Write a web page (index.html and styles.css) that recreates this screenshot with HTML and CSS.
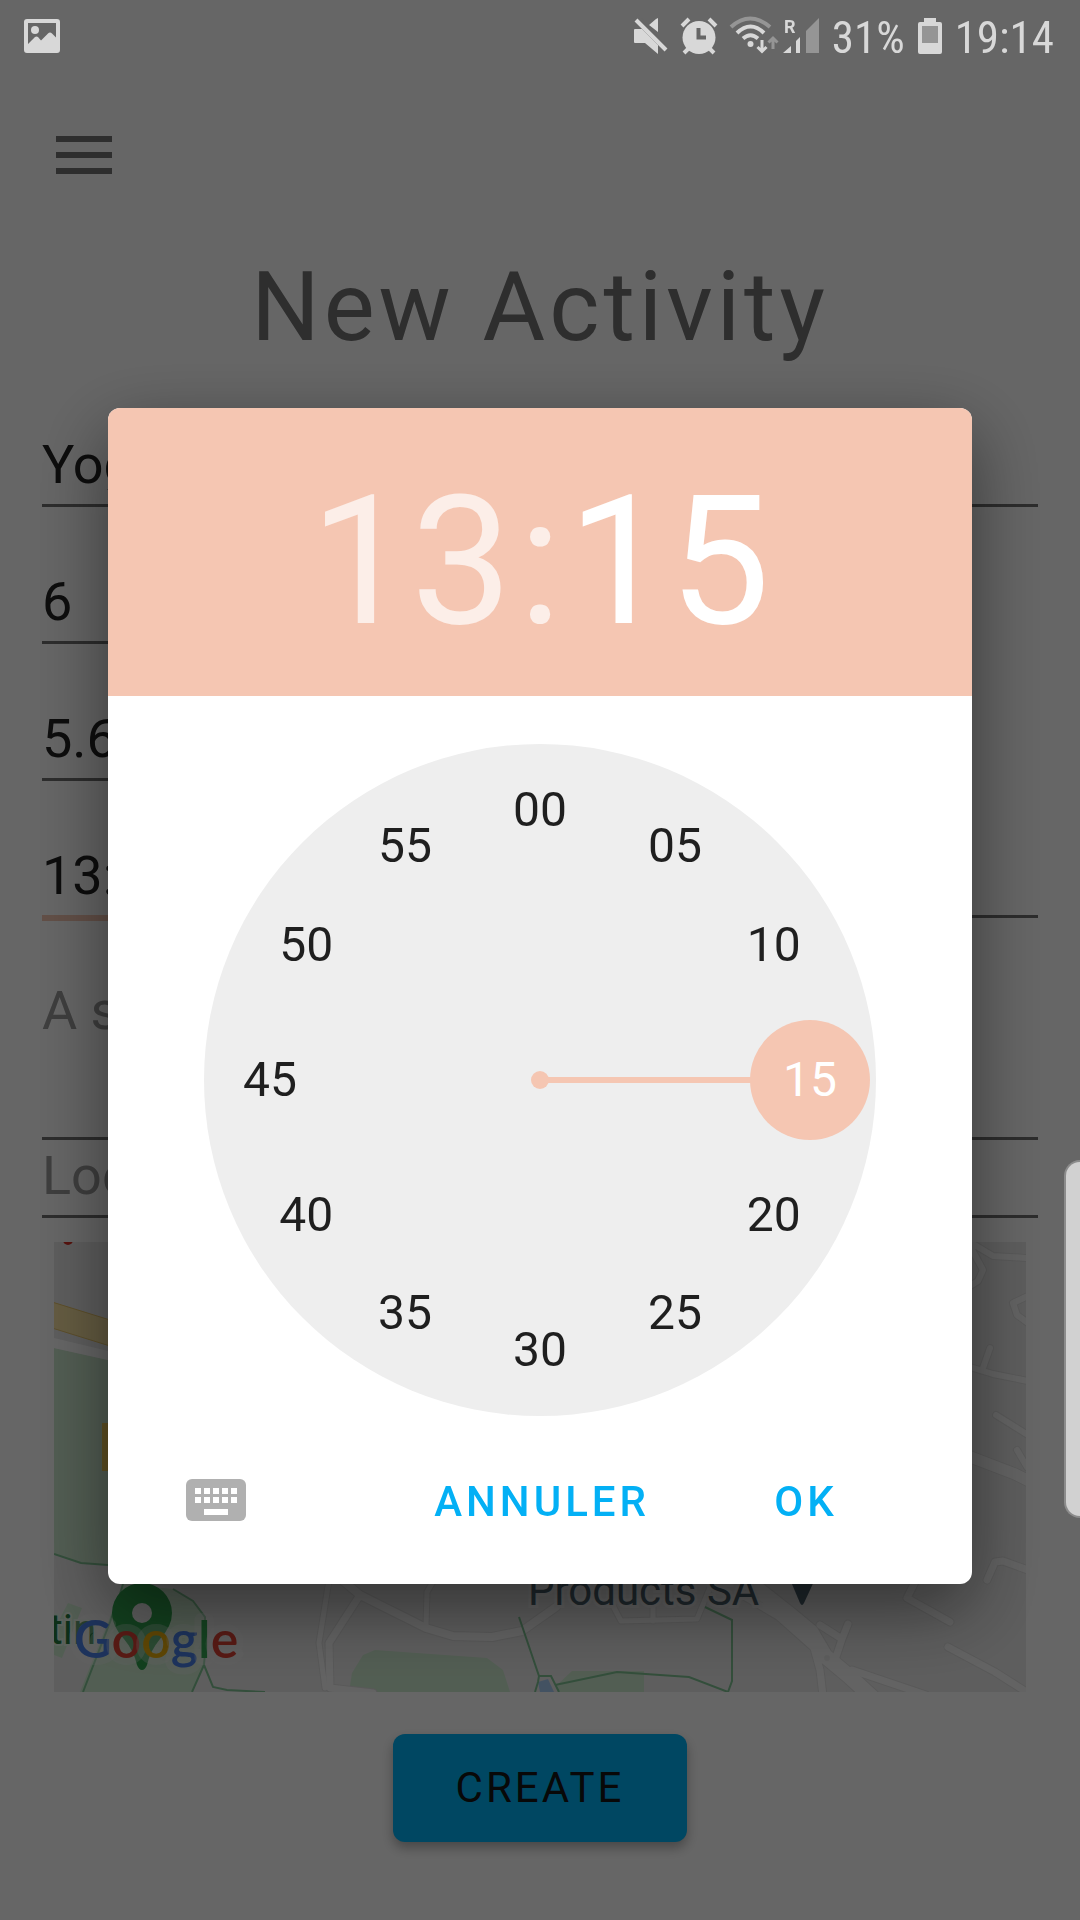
FILE: index.html
```html
<!DOCTYPE html>
<html lang="fr">
<head>
<meta charset="utf-8">
<meta name="viewport" content="width=device-width, initial-scale=1">
<title>New Activity</title>
<link rel="stylesheet" href="styles.css">
</head>
<body>
<header class="status">
  <svg class="status-icon status-photo" viewBox="0 0 36 36" width="36" height="36" aria-hidden="true">
    <path fill-rule="evenodd" d="M3 1h30a3 3 0 0 1 3 3v28a3 3 0 0 1-3 3H3a3 3 0 0 1-3-3V4a3 3 0 0 1 3-3zM4 5v21l7-7q1.500-1 3 0l3 3.500 7-7q2-2 4 0l4 4V5z"/>
    <circle cx="11" cy="12" r="4"/>
  </svg>
  <svg class="status-icon" viewBox="0 0 34 36" width="34" height="36" aria-hidden="true">
    <path d="M1 11h7L24 27v9L11 25H1q-1 0-1-1V12q0-1 1-1zM24 0v14l-9-7 7-6z"/>
    <path class="knock" d="M3 -2L33 32"/>
    <path class="bar" d="M2 2L32 32"/>
  </svg>
  <svg class="status-icon" viewBox="0 0 36 36" width="36" height="36" aria-hidden="true">
    <circle cx="18" cy="19.500" r="16.500"/>
    <path class="bar" d="M1 8l7-7M35 8l-7-7M3 35l6-6M33 35l-6-6"/>
    <path class="hand" d="M17.500 10v9.500H25"/>
  </svg>
  <svg class="status-icon" viewBox="0 0 48 36" width="48" height="36" aria-hidden="true">
    <path class="arc dim" d="M1 9Q20-8 40 9"/>
    <path class="arc" d="M7 15Q20.500 2 34 15M13 20.500Q20.500 14 28 20.500"/>
    <circle cx="20.500" cy="26" r="3"/>
    <path class="arrow" d="M32 22v11M27.500 29l4.500 4.500 4.500-4.500"/>
    <path class="arrow dim" d="M43 31V21M38.500 24.500L43 20l4.500 4.500"/>
  </svg>
  <svg class="status-icon signal" viewBox="0 0 36 36" width="36" height="36" aria-hidden="true">
    <text class="roaming" x="1" y="15">R</text>
    <path d="M0 35l8-7v7zM13 23l4-4v16h-4z"/>
    <path class="faint" d="M23 13L36 0v35H23z"/>
  </svg>
  <span class="status-text">31%</span>
  <svg class="status-icon" viewBox="0 0 24 36" width="24" height="36" aria-hidden="true">
    <path d="M6 0h12v4h4q2 0 2 2v28q0 2-2 2H2q-2 0-2-2V6q0-2 2-2h4z"/>
    <path class="level" d="M4 8h16v17H4z"/>
  </svg>
  <time class="status-text">19:14</time>
</header>

<main class="page">
  <button class="menu" type="button" aria-label="Menu"><span></span><span></span><span></span></button>
  <h1 class="title">New Activity</h1>
  <form class="form">
    <input class="field" type="text" aria-label="Name" value="Yoga">
    <input class="field field-short" type="text" aria-label="Participants" value="6">
    <input class="field field-short" type="text" aria-label="Price" value="5.6">
    <div class="pair">
      <input class="field field-active" type="text" aria-label="Time" value="13:15">
      <input class="field" type="text" aria-label="Date">
    </div>
    <textarea class="field field-area" aria-label="Description" placeholder="A short description"></textarea>
    <input class="field field-joined" type="text" aria-label="Location" placeholder="Location">
    <svg class="map" viewBox="0 0 972 450" role="img" aria-label="Map">
      <rect class="land" width="972" height="450"/>
      <g class="park">
        <path d="M0 106l54 12v205l-27-2-27-9z"/>
        <path d="M69 342l50 5 20 12 12 16v35l-1 13-12 27H26z"/>
        <path d="M14 361l14 5-20 50-8-3v-25z"/>
        <path d="M295 450l3-19 11-18 12-5 112 8 16 12 7 22z"/>
        <path d="M503 443l15-14h72v21h-86z"/>
      </g>
      <path class="highway" d="M-2 60l58 18v26L-2 86z"/>
      <path class="lane" d="M0 96l54 13v9L0 106z"/>
      <path class="block" d="M48 181h8v48h-8z"/>
      <circle class="stop" cx="14" cy="-2" r="5"/>
      <g class="casing">
        <path class="w9" d="M288 338l18 15 66 33 27 8 39 1 30-6 34-24"/>
        <path class="w8" d="M306 353l-31 48 1 45 43 5"/>
        <path class="w6" d="M275 338l-10 63 6 45M380 338l-7 12-1 34M557 360l10 19 76-2 14-34M599 365v14"/>
        <path class="w14" d="M697 342l38 30 22 18 14 24 24 20 24 22"/>
        <path class="w8" d="M690 354l34 20 36 32 6 22 3 26M798 428l74 25M766 383l22 14 6-15M788 397l-6 18"/>
        <path class="w8" d="M862 338l-9 18 43 24M894 405l47 25 33 21M933 338l8-18 8-1 25 9"/>
        <path class="w7" d="M919 2l20 12 35 2M916 4l13 24-5 11-8 5M974 54l-15 7 4 12 11 8M936 106l-7 20M916 125l23 7 35 7M942 173l32 20M963 208l10 17"/>
        <path class="w12" d="M914 214l47 18 14 7"/>
      </g>
      <g class="road">
        <path class="w9" d="M288 338l18 15 66 33 27 8 39 1 30-6 34-24"/>
        <path class="w8" d="M306 353l-31 48 1 45 43 5"/>
        <path class="w6" d="M275 338l-10 63 6 45M380 338l-7 12-1 34M557 360l10 19 76-2 14-34M599 365v14"/>
        <path class="w14" d="M697 342l38 30 22 18 14 24 24 20 24 22"/>
        <path class="w8" d="M690 354l34 20 36 32 6 22 3 26M798 428l74 25M766 383l22 14 6-15M788 397l-6 18"/>
        <path class="w8" d="M862 338l-9 18 43 24M894 405l47 25 33 21M933 338l8-18 8-1 25 9"/>
        <path class="w7" d="M919 2l20 12 35 2M916 4l13 24-5 11-8 5M974 54l-15 7 4 12 11 8M936 106l-7 20M916 125l23 7 35 7M942 173l32 20M963 208l10 17"/>
        <path class="w12" d="M914 214l47 18 14 7"/>
      </g>
      <circle class="island" cx="773" cy="416" r="3"/>
      <path class="pond" d="M484 440l10-3 6 13h-14z"/>
      <g class="trail">
        <path d="M0 312l27 9 27 2"/>
        <path d="M69 342l-3 10-10 28-27 70M119 347l20 12 12 16v35l-1 13-12 27M150 423l9 22 14 3 38 2"/>
        <path d="M465 375l20 59h12l8 16M485 434l-1 6-3 10M501 443l62-13 43 3 29 2 39 15 4-11v-61l-27-13"/>
      </g>
      <path class="poi" d="M735 335h27l-12 26q-2 4-4 0z"/>
      <text class="poi-label" x="474" y="363">Products SA</text>
      <path class="pin" fill-rule="evenodd" d="M88 341a30 30 0 0 1 30 30q0 13-12 26-10 12-13 26-2 5-5 5t-5-5q-3-14-13-26-12-13-12-26a30 30 0 0 1 30-30z"/>
      <circle class="pin-hole" cx="88" cy="371" r="10"/>
      <text class="park-label" x="-5" y="402">tin</text>
      <text class="brand" x="20" y="416"><tspan class="blue">G</tspan><tspan class="red">o</tspan><tspan class="yellow">o</tspan><tspan class="blue">g</tspan><tspan class="green">l</tspan><tspan class="red">e</tspan></text>
    </svg>
    <button class="create" type="button">CREATE</button>
  </form>
</main>

<div class="scrim">
  <section class="dialog" role="dialog" aria-modal="true" aria-label="13:15">
    <div class="readout">
      <button class="digits" type="button">13</button><span class="colon">:</span><button class="digits digits-on" type="button">15</button>
    </div>
    <div class="dial-wrap">
      <div class="dial">
        <div class="hand-line"></div>
        <div class="hub"></div>
        <button class="minute" type="button" style="--m:0">00</button>
        <button class="minute" type="button" style="--m:5">05</button>
        <button class="minute" type="button" style="--m:10">10</button>
        <button class="minute minute-on" type="button" style="--m:15">15</button>
        <button class="minute" type="button" style="--m:20">20</button>
        <button class="minute" type="button" style="--m:25">25</button>
        <button class="minute" type="button" style="--m:30">30</button>
        <button class="minute" type="button" style="--m:35">35</button>
        <button class="minute" type="button" style="--m:40">40</button>
        <button class="minute" type="button" style="--m:45">45</button>
        <button class="minute" type="button" style="--m:50">50</button>
        <button class="minute" type="button" style="--m:55">55</button>
      </div>
    </div>
    <div class="actions">
      <button class="keyboard" type="button" aria-label="Clavier">
        <svg viewBox="0 0 60 42" width="60" height="42" aria-hidden="true">
          <rect class="keys-body" width="60" height="42" rx="6"/>
          <path class="keys" d="M9 9h6v6H9zM18 9h6v6h-6zM27 9h6v6h-6zM36 9h6v6h-6zM45 9h6v6h-6zM9 18h6v6H9zM18 18h6v6h-6zM27 18h6v6h-6zM36 18h6v6h-6zM45 18h6v6h-6zM18 30h24v6H18z"/>
        </svg>
      </button>
      <button class="action" type="button">ANNULER</button>
      <button class="action" type="button">OK</button>
    </div>
  </section>
</div>
<div class="edge-handle"></div>
</body>
</html>
```
FILE: styles.css
```css
* { box-sizing: border-box; }

body {
  margin: 0;
  min-height: 100vh;
  background: #fff;
  color: #212121;
  font-family: Roboto, "Liberation Sans", sans-serif;
}

button {
  margin: 0;
  padding: 0;
  border: 0;
  background: none;
  color: inherit;
  font: inherit;
  cursor: pointer;
}

/* Status bar, kept above the scrim */
.status {
  position: relative;
  z-index: 2;
  display: flex;
  align-items: center;
  gap: 13px;
  height: 72px;
  padding: 0 26px 0 24px;
  color: #d8d8d8;
}
.status-icon { flex: none; overflow: visible; fill: currentColor; }
.status-photo { margin-right: auto; }
.status-text {
  padding-top: 3px;
  font-family: "Roboto Condensed", Roboto, sans-serif;
  font-size: 45px;
  line-height: 69px;
}
.status .signal { margin-left: -8px; }
.bar { fill: none; stroke: currentColor; stroke-width: 4; }
.knock { fill: none; stroke: #666; stroke-width: 4; }
.hand { fill: none; stroke: #666; stroke-width: 4; }
.arc { fill: none; stroke: currentColor; stroke-width: 4; }
.arrow { fill: none; stroke: currentColor; stroke-width: 3; }
.dim { stroke: #959595; }
.faint, .level { fill: #959595; }
.roaming { font-size: 18px; font-weight: 700; }

/* Page */
.page { padding: 64px 42px 0; }
.menu {
  display: grid;
  gap: 10px;
  width: 56px;
  margin-left: 14px;
}
.menu span { height: 6px; background: #737373; }
.title {
  margin: 77px 0 66px;
  color: #737373;
  font-size: 96px;
  font-weight: 400;
  line-height: 112px;
  letter-spacing: 4px;
  text-align: center;
}
.form { display: flex; flex-direction: column; }
.field {
  width: 100%;
  height: 78px;
  margin: 0 0 59px;
  padding: 0 0 4px;
  border: 0;
  border-bottom: 3px solid #707070;
  border-radius: 0;
  background: none;
  color: #212121;
  font: 54px Roboto, "Liberation Sans", sans-serif;
  outline: 0;
}
.field::placeholder { color: #9c9c9c; opacity: 1; }
.field-short { width: 40%; }
.pair { display: grid; grid-template-columns: 1fr 1fr; gap: 24px; }
.pair .field { margin: 0; }
.field-active { border-color: #f5c6b2; box-shadow: 0 3px #f5c6b2; }
.field-area {
  height: 222px;
  margin: 0;
  padding: 61px 0 0;
  line-height: 63px;
  resize: none;
}
.field-joined { margin: 0 0 24px; }

/* Map */
.map { display: block; margin: 0 12px; overflow: hidden; }
.land, .island, .pin-hole { fill: #ebebeb; }
.park { fill: #ceead0; }
.highway { fill: #fbe6a4; stroke: #e6c36a; stroke-width: 1; }
.lane { fill: #fff; }
.block { fill: #f5cf5a; }
.stop { fill: #d93025; }
.casing, .road { fill: none; stroke-linecap: round; stroke-linejoin: round; }
.casing { stroke: #dedede; }
.road { stroke: #f8f8f8; }
.road .w6 { stroke-width: 5; }
.road .w7 { stroke-width: 6; }
.road .w8 { stroke-width: 7; }
.road .w9 { stroke-width: 8; }
.road .w12 { stroke-width: 11; }
.road .w14 { stroke-width: 15; }
.casing .w6 { stroke-width: 7; }
.casing .w7 { stroke-width: 8; }
.casing .w8 { stroke-width: 9; }
.casing .w9 { stroke-width: 10; }
.casing .w12 { stroke-width: 13; }
.casing .w14 { stroke-width: 17; }
.pond { fill: #a9cdf5; }
.trail { fill: none; stroke: #80c494; stroke-width: 2; }
.poi { fill: #4e6470; }
.poi-label { fill: #4e6470; font-size: 42px; paint-order: stroke; stroke: #f4f4f4; stroke-width: 6px; }
.park-label { fill: #23783d; font-size: 42px; paint-order: stroke; stroke: #e4f3e5; stroke-width: 4px; }
.pin { fill: #2fa04c; }
.brand {
  font-family: Lato, Roboto, sans-serif;
  font-size: 52px;
  font-weight: 600;
  paint-order: stroke;
  stroke: rgba(245, 245, 245, 0.300);
  stroke-width: 14px;
  stroke-linejoin: round;
}
.blue { fill: #4a80e8; }
.red { fill: #dd4335; }
.yellow { fill: #edb00c; }
.green { fill: #34a853; }

.create {
  align-self: center;
  height: 108px;
  margin-top: 42px;
  padding: 0 63px 2px;
  border-radius: 12px;
  background: #00b1f5;
  box-shadow: 0 6px 12px rgba(0, 0, 0, 0.300);
  color: #141414;
  font-size: 42px;
  letter-spacing: 3px;
}

/* Time picker */
.scrim {
  position: fixed;
  inset: 0;
  z-index: 1;
  display: flex;
  align-items: center;
  justify-content: center;
  padding-top: 72px;
  background: rgba(0, 0, 0, 0.600);
}
.dialog {
  width: 80%;
  overflow: hidden;
  border-radius: 12px;
  background: #fff;
  box-shadow: 0 24px 72px rgba(0, 0, 0, 0.480);
}
.readout {
  display: flex;
  align-items: center;
  justify-content: center;
  gap: 6px;
  height: 288px;
  padding-top: 20px;
  background: #f5c6b2;
  color: #fceee8;
  font-size: 180px;
  line-height: 210px;
}
.digits-on { color: #fff; }
.dial-wrap { padding: 48px 96px 0; }
.dial {
  position: relative;
  aspect-ratio: 1;
  border-radius: 50%;
  background: #eee;
}
.hand-line {
  position: absolute;
  top: calc(50% - 3px);
  left: 50%;
  width: 40%;
  height: 6px;
  background: #f5c6b2;
}
.hub {
  position: absolute;
  top: calc(50% - 9px);
  left: calc(50% - 9px);
  width: 18px;
  height: 18px;
  border-radius: 50%;
  background: #f5c6b2;
}
.minute {
  --reach: calc(50% - 66px);
  position: absolute;
  left: calc(50% + var(--reach) * sin(var(--m) * 6deg) - 60px);
  top: calc(50% - var(--reach) * cos(var(--m) * 6deg) - 60px);
  width: 120px;
  height: 120px;
  padding-bottom: 2px;
  border-radius: 50%;
  color: #1f1f1f;
  font-size: 48px;
}
.minute-on { background: #f5c6b2; color: #fff; }
.actions {
  display: flex;
  align-items: center;
  gap: 24px;
  height: 168px;
  padding: 0 70px 0 78px;
}
.keyboard { margin-right: auto; line-height: 0; }
.keys-body { fill: #b0b0b0; }
.keys { fill: #fff; }
.action {
  min-width: 192px;
  height: 108px;
  padding: 2px 36px 0;
  color: #03b0f5;
  font-size: 42px;
  font-weight: 500;
  letter-spacing: 4px;
}

/* System edge panel handle */
.edge-handle {
  position: fixed;
  top: 1160px;
  right: 0;
  z-index: 2;
  width: 16px;
  height: 358px;
  border: 2px solid #8c8c8c;
  border-right: 0;
  border-radius: 18px 0 0 18px;
  background: #d1d1d1;
}
```
